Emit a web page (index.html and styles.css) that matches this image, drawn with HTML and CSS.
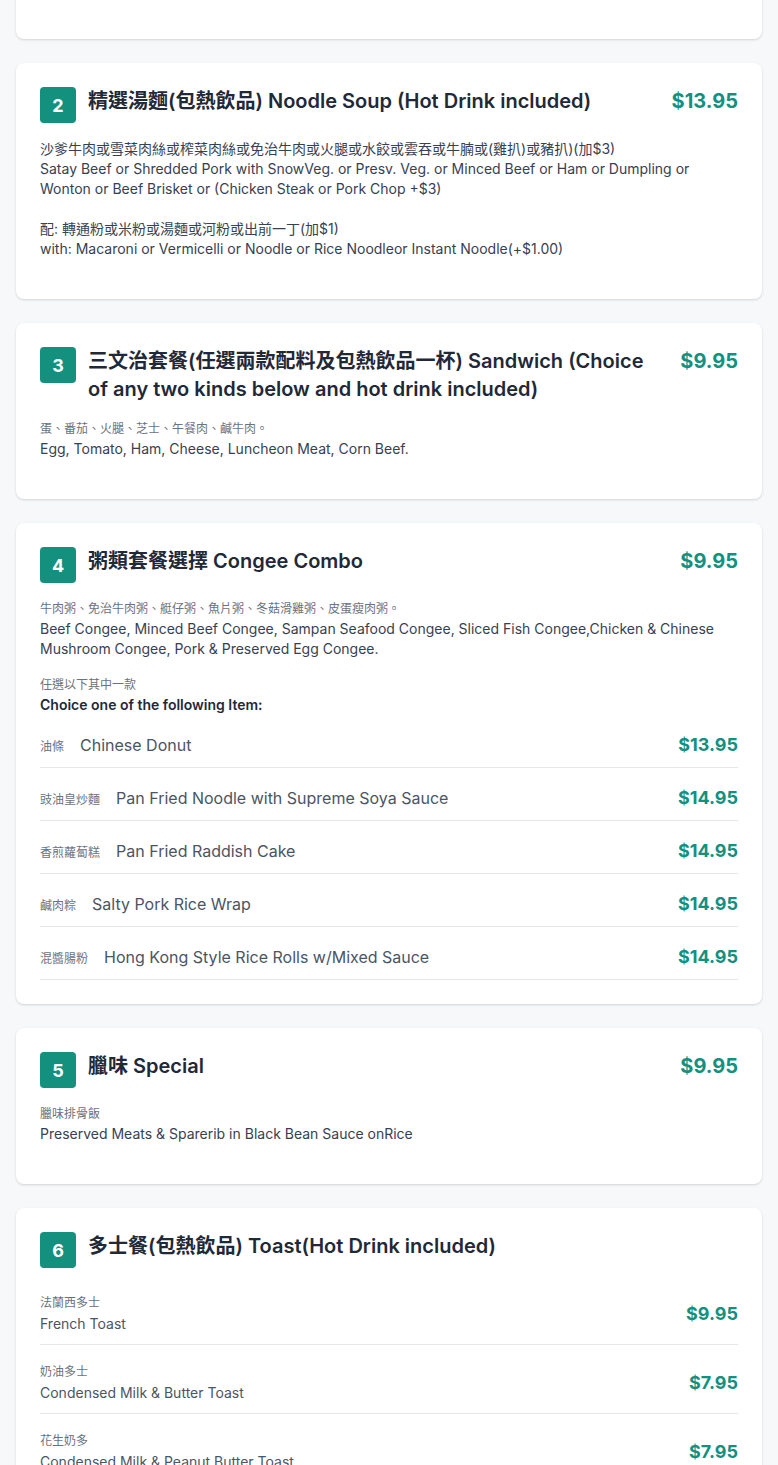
FILE: index.html
```html
<!DOCTYPE html>
<html lang="en">
<head>
<meta charset="utf-8">
<title>Menu</title>
<link rel="stylesheet" href="styles.css">
</head>
<body>
<main class="menu">
  <section class="card">
    <div class="card-head">
      <span class="badge">1</span>
      <h2 class="title">常餐 Daily Set</h2>
      <span class="price">$12.95</span>
    </div>
    <div class="desc">
      <div class="zh">火腿通粉、炒蛋、牛油多士</div>
      <div class="en">Macaroni with Ham, Scrambled Egg, Butter Toast</div>
    </div>
  </section>

  <section class="card">
    <div class="card-head">
      <span class="badge">2</span>
      <h2 class="title">精選湯麵(包熱飲品) Noodle Soup (Hot Drink included)</h2>
      <span class="price">$13.95</span>
    </div>
    <p class="para">沙爹牛肉或雪菜肉絲或榨菜肉絲或免治牛肉或火腿或水餃或雲吞或牛腩或(雞扒)或豬扒)(加$3)<br>Satay Beef or Shredded Pork with SnowVeg. or Presv. Veg. or Minced Beef or Ham or Dumpling or Wonton or Beef Brisket or (Chicken Steak or Pork Chop +$3)<br><br>配: 轉通粉或米粉或湯麵或河粉或出前一丁(加$1)<br>with: Macaroni or Vermicelli or Noodle or Rice Noodleor Instant Noodle(+$1.00)</p>
  </section>

  <section class="card">
    <div class="card-head">
      <span class="badge">3</span>
      <h2 class="title">三文治套餐(任選兩款配料及包熱飲品一杯) Sandwich (Choice of any two kinds below and hot drink included)</h2>
      <span class="price">$9.95</span>
    </div>
    <div class="desc">
      <div class="zh">蛋、番茄、火腿、芝士、午餐肉、鹹牛肉。</div>
      <div class="en">Egg, Tomato, Ham, Cheese, Luncheon Meat, Corn Beef.</div>
    </div>
  </section>

  <section class="card card-list">
    <div class="card-head">
      <span class="badge">4</span>
      <h2 class="title">粥類套餐選擇 Congee Combo</h2>
      <span class="price">$9.95</span>
    </div>
    <div class="desc">
      <div class="zh">牛肉粥、免治牛肉粥、艇仔粥、魚片粥、冬菇滑雞粥、皮蛋瘦肉粥。</div>
      <div class="en">Beef Congee, Minced Beef Congee, Sampan Seafood Congee, Sliced Fish Congee,Chicken &amp; Chinese Mushroom Congee, Pork &amp; Preserved Egg Congee.</div>
    </div>
    <div class="choice">
      <div class="zh">任選以下其中一款</div>
      <div class="choice-en">Choice one of the following Item:</div>
    </div>
    <ul class="options">
      <li class="option"><span class="opt-name"><span class="opt-zh">油條</span><span class="opt-en">Chinese Donut</span></span><span class="opt-price">$13.95</span></li>
      <li class="option"><span class="opt-name"><span class="opt-zh">豉油皇炒麵</span><span class="opt-en">Pan Fried Noodle with Supreme Soya Sauce</span></span><span class="opt-price">$14.95</span></li>
      <li class="option"><span class="opt-name"><span class="opt-zh">香煎蘿蔔糕</span><span class="opt-en">Pan Fried Raddish Cake</span></span><span class="opt-price">$14.95</span></li>
      <li class="option"><span class="opt-name"><span class="opt-zh">鹹肉粽</span><span class="opt-en">Salty Pork Rice Wrap</span></span><span class="opt-price">$14.95</span></li>
      <li class="option"><span class="opt-name"><span class="opt-zh">混醬腸粉</span><span class="opt-en">Hong Kong Style Rice Rolls w/Mixed Sauce</span></span><span class="opt-price">$14.95</span></li>
    </ul>
  </section>

  <section class="card">
    <div class="card-head">
      <span class="badge">5</span>
      <h2 class="title">臘味 Special</h2>
      <span class="price">$9.95</span>
    </div>
    <div class="desc">
      <div class="zh">臘味排骨飯</div>
      <div class="en">Preserved Meats &amp; Sparerib in Black Bean Sauce onRice</div>
    </div>
  </section>

  <section class="card card-items">
    <div class="card-head head-tight">
      <span class="badge">6</span>
      <h2 class="title">多士餐(包熱飲品) Toast(Hot Drink included)</h2>
    </div>
    <ul class="items">
      <li class="item"><div class="item-name"><div class="item-zh">法蘭西多士</div><div class="item-en">French Toast</div></div><span class="item-price">$9.95</span></li>
      <li class="item"><div class="item-name"><div class="item-zh">奶油多士</div><div class="item-en">Condensed Milk &amp; Butter Toast</div></div><span class="item-price">$7.95</span></li>
      <li class="item"><div class="item-name"><div class="item-zh">花生奶多</div><div class="item-en">Condensed Milk &amp; Peanut Butter Toast</div></div><span class="item-price">$7.95</span></li>
      <li class="item"><div class="item-name"><div class="item-zh">牛油果醬多士</div><div class="item-en">Butter &amp; Jam Toast</div></div><span class="item-price">$7.95</span></li>
    </ul>
  </section>
</main>
</body>
</html>
```

FILE: styles.css
```css
* { box-sizing: border-box; }

html, body {
  margin: 0;
  padding: 0;
  background: #f7f8fa;
  font-family: Inter, "Noto Sans CJK TC", "Noto Sans", sans-serif;
  color: #374151;
}

.menu {
  display: flex;
  flex-direction: column;
  gap: 24px;
  padding: 0 16px 24px;
  margin-top: -117px;
}

.card {
  background: #ffffff;
  border-radius: 8px;
  box-shadow: 0 1px 3px rgba(0, 0, 0, 0.10), 0 1px 2px rgba(0, 0, 0, 0.06);
  padding: 24px;
}

.card-head {
  display: flex;
  align-items: flex-start;
  gap: 12px;
  margin-bottom: 16px;
}

.head-tight { margin-bottom: 8px; }

.badge {
  flex: none;
  width: 36px;
  height: 36px;
  border-radius: 4px;
  background: #14907f;
  color: #ffffff;
  font-size: 18px;
  font-weight: 700;
  display: flex;
  align-items: center;
  justify-content: center;
}

.title {
  flex: 1;
  margin: 0;
  font-size: 20px;
  line-height: 28px;
  font-weight: 600;
  color: #1f2937;
}

.price {
  flex: none;
  margin-left: 24px;
  font-size: 20px;
  line-height: 28px;
  font-weight: 700;
  color: #14907f;
}

.para {
  margin: 0 0 16px;
  font-size: 14px;
  line-height: 20px;
  color: #374151;
}

.desc { margin-bottom: 16px; }

.zh {
  font-size: 12px;
  line-height: 20px;
  color: #6b7280;
}

.en {
  font-size: 14px;
  line-height: 20px;
  color: #374151;
}

.choice-en {
  font-size: 14px;
  line-height: 20px;
  font-weight: 600;
  color: #1f2937;
}

.options, .items {
  list-style: none;
  margin: 0;
  padding: 0;
}

.option {
  display: flex;
  align-items: center;
  justify-content: space-between;
  padding: 16px 0 8px;
  border-bottom: 1px solid #e5e7eb;
}

.opt-name {
  display: flex;
  align-items: center;
  gap: 16px;
}

.opt-zh {
  font-size: 12px;
  color: #6b7280;
}

.opt-en {
  font-size: 16px;
  line-height: 24px;
  color: #4b5563;
}

.opt-price {
  font-size: 18px;
  line-height: 28px;
  font-weight: 700;
  color: #14907f;
}

.item {
  display: flex;
  align-items: center;
  justify-content: space-between;
  padding: 18px 0 10px;
  border-bottom: 1px solid #e5e7eb;
}

.item-zh {
  font-size: 12px;
  line-height: 18px;
  color: #6b7280;
}

.item-en {
  margin-top: 2px;
  font-size: 14px;
  line-height: 20px;
  color: #4b5563;
}

.item-price {
  font-size: 18px;
  line-height: 28px;
  font-weight: 700;
  color: #14907f;
}
```
